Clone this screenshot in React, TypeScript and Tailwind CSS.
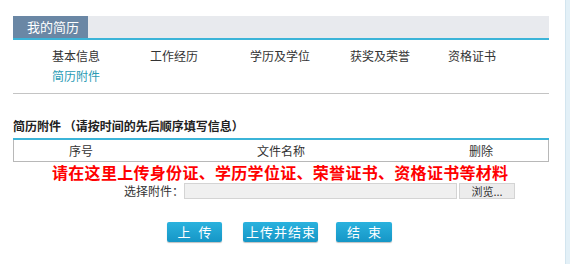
const navItems = ["基本信息", "工作经历", "学历及学位", "获奖及荣誉", "资格证书"];

const font = { fontFamily: '"Noto Sans CJK SC", "Liberation Sans", sans-serif' };

const App = () => {
  return (
    <div className="flex w-[570px] h-[264px] bg-white text-[#333]" style={font}>
      <div className="w-[565px] pl-[13px] pr-[16px] pt-[16px]">
        {/* tab bar */}
        <div className="flex h-[24px] bg-[#e8eaee] border-b-2 border-[#3bb4d8]">
          <div className="w-[75px] bg-[#6a87a5] text-white text-[13px] leading-[22px] pl-[14px]">
            我的简历
          </div>
        </div>

        {/* sub nav */}
        <div className="pl-[39px] pt-[6px] text-[12px] leading-[20px]">
          <div className="grid grid-cols-[98px_100px_100px_98px_auto]">
            {navItems.map((item) => (
              <span key={item}>{item}</span>
            ))}
          </div>
          <div className="text-[#2a9bb5]">简历附件</div>
        </div>
        <div className="mt-[7px] border-b border-[#c4c4c4]" />

        {/* attachments */}
        <div className="mt-[24px] text-[12px] leading-[16px] font-bold text-[#222]">
          简历附件 （请按时间的先后顺序填写信息）
        </div>
        <div className="mt-[4px] border-t-2 border-[#3bb4d8]" />
        <div className="grid grid-cols-[134px_266px_1fr] h-[22px] border border-t-0 border-[#b8b8b8] text-[12px] leading-[21px] text-center">
          <span>序号</span>
          <span>文件名称</span>
          <span>删除</span>
        </div>

        <div className="h-[21px] pl-[39px] text-[16px] leading-[20px] font-bold text-[#ff0000] tracking-[0.3px] whitespace-nowrap">
          请在这里上传身份证、学历学位证、荣誉证书、资格证书等材料
        </div>

        <div className="flex items-center h-[16px] text-[12px] leading-[16px]">
          <span className="w-[171px] text-right">选择附件：</span>
          <div className="w-[273px] h-[16px] bg-[#f0f0f0] border border-[#d4d4d4]" />
          <button className="ml-[2px] w-[56px] h-[16px] bg-[#ececec] border border-[#d4d4d4] text-[11px] leading-[14px] text-[#333]">
            浏览...
          </button>
        </div>

        <div className="flex mt-[23px] text-white text-[13px] whitespace-nowrap">
          <button className="ml-[154px] w-[55px] h-[20px] rounded-[2px] bg-gradient-to-b from-[#2ab2de] to-[#1596c6] shadow-[0_1px_1px_rgba(0,0,0,0.25)] tracking-[8px] pl-[8px] leading-[20px]">
            上传
          </button>
          <button className="ml-[21px] w-[75px] h-[20px] rounded-[2px] bg-gradient-to-b from-[#2ab2de] to-[#1596c6] shadow-[0_1px_1px_rgba(0,0,0,0.25)] tracking-[1px] pl-[1px] leading-[20px]">
            上传并结束
          </button>
          <button className="ml-[18px] w-[56px] h-[20px] rounded-[2px] bg-gradient-to-b from-[#2ab2de] to-[#1596c6] shadow-[0_1px_1px_rgba(0,0,0,0.25)] tracking-[8px] pl-[8px] leading-[20px]">
            结束
          </button>
        </div>
      </div>
      <div className="w-[5px] bg-[#e3f0f7] border-l border-[#d3e5ef]" />
    </div>
  );
};

export default App;
